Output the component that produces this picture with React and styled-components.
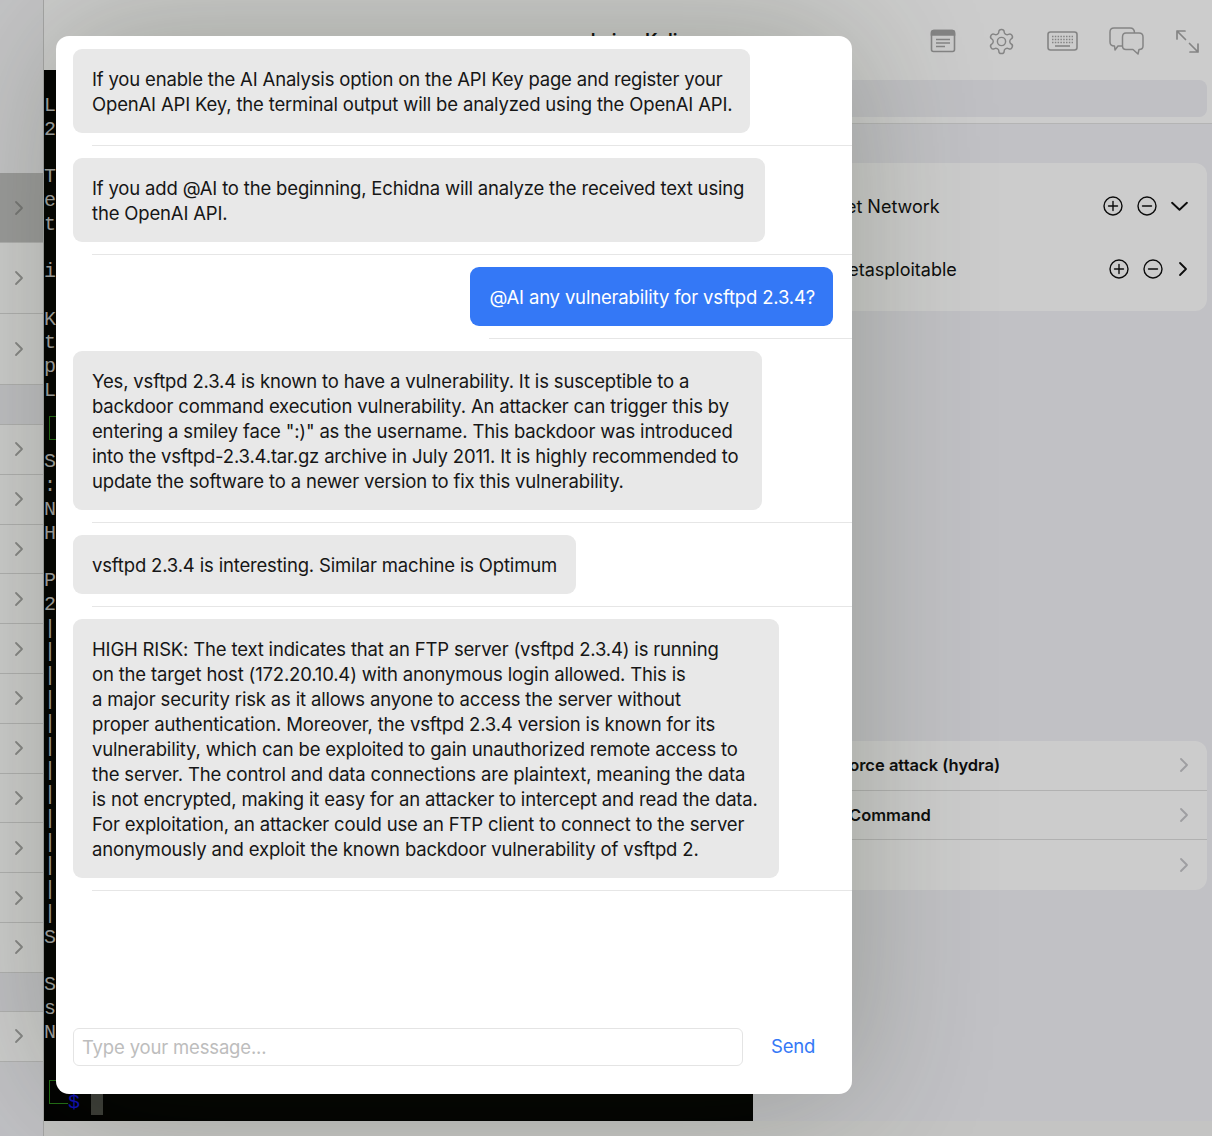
import React from 'react'
import styled, { createGlobalStyle } from 'styled-components'

const GlobalStyle = createGlobalStyle`
  html, body { margin: 0; padding: 0; background: #f2f2f7; }
  body { font-family: Inter, "Noto Sans", "Liberation Sans", sans-serif; }
  * { box-sizing: border-box; }
`

const sideRows = [
  { h: 173, kind: 'blank' },
  { h: 70, kind: 'selected', arrow: true },
  { h: 71, kind: 'row', arrow: true },
  { h: 71, kind: 'row', arrow: true },
  { h: 40, kind: 'section' },
  ...Array.from({ length: 11 }, () => ({ h: 49.8, kind: 'row', arrow: true })),
  { h: 39, kind: 'section' },
  { h: 50, kind: 'row', arrow: true },
]

// only the first column of the terminal shows beside the sheet
const termLines = [
  '', 'L', '2', '', 'T', 'e', 't', '', 'i', '', 'K', 't', 'p', 'L', '', '', 'S', ':', 'N', 'H', '', 'P', '2',
  '|', '|', '|', '|', '|', '|', '|', '|', '|', '|', '|', '|', '|', 'S', '', 'S', 's', 'N',
]

const messages = [
  { extra: 0, lines: ['If you enable the AI Analysis option on the API Key page and register your', 'OpenAI API Key, the terminal output will be analyzed using the OpenAI API.'] },
  { extra: 3, lines: ['If you add @AI to the beginning, Echidna will analyze the received text using', 'the OpenAI API.'] },
  { mine: true, extra: 0, lines: ['@AI any vulnerability for vsftpd 2.3.4?'] },
  {
    extra: 6,
    lines: [
      'Yes, vsftpd 2.3.4 is known to have a vulnerability. It is susceptible to a',
      'backdoor command execution vulnerability. An attacker can trigger this by',
      'entering a smiley face ":)" as the username. This backdoor was introduced',
      'into the vsftpd-2.3.4.tar.gz archive in July 2011. It is highly recommended to',
      'update the software to a newer version to fix this vulnerability.',
    ],
  },
  { extra: 1, lines: ['vsftpd 2.3.4 is interesting. Similar machine is Optimum'] },
  {
    extra: 3,
    lines: [
      'HIGH RISK: The text indicates that an FTP server (vsftpd 2.3.4) is running',
      'on the target host (172.20.10.4) with anonymous login allowed. This is',
      'a major security risk as it allows anyone to access the server without',
      'proper authentication. Moreover, the vsftpd 2.3.4 version is known for its',
      'vulnerability, which can be exploited to gain unauthorized remote access to',
      'the server. The control and data connections are plaintext, meaning the data',
      'is not encrypted, making it easy for an attacker to intercept and read the data.',
      'For exploitation, an attacker could use an FTP client to connect to the server',
      'anonymously and exploit the known backdoor vulnerability of vsftpd 2.',
    ],
  },
]

function Chevron({ right = true, color = '#a8a8a8', size = 16 }) {
  return (
    <svg width={size} height={size} viewBox="0 0 16 16" fill="none" stroke={color} strokeWidth="1.8" strokeLinecap="round" strokeLinejoin="round">
      {right ? <path d="M5 2 L11 8 L5 14" /> : <path d="M1 4.5 L8 11 L15 4.5" />}
    </svg>
  )
}

function RoundIcon({ plus }) {
  return (
    <svg width="20" height="20" viewBox="0 0 20 20" fill="none" stroke="#111" strokeWidth="1.4" strokeLinecap="round">
      <circle cx="10" cy="10" r="9" />
      <path d="M5.5 10 H14.5" />
      {plus && <path d="M10 5.5 V14.5" />}
    </svg>
  )
}

function ToolIcons() {
  return (
    <Tools>
      <svg width="26" height="24" viewBox="0 0 26 24" fill="none" stroke="#a6a6a6" strokeWidth="1.6">
        <rect x="1.5" y="1.5" width="23" height="21" rx="2" />
        <path d="M1.5 5 Q1.5 1.5 4 1.5 H22 Q24.5 1.5 24.5 5 V6 H1.5 Z" fill="#a6a6a6" />
        <path d="M6 10.5 H20 M6 14 H20 M6 17.5 H15" />
      </svg>
      <svg width="29" height="29" viewBox="0 0 24 24" fill="none" stroke="#a6a6a6" strokeWidth="1.2" strokeLinejoin="round">
        <path d="M12.22 2h-.44a2 2 0 0 0-2 2v.18a2 2 0 0 1-1 1.73l-.43.25a2 2 0 0 1-2 0l-.15-.08a2 2 0 0 0-2.73.73l-.22.38a2 2 0 0 0 .73 2.73l.15.1a2 2 0 0 1 1 1.72v.51a2 2 0 0 1-1 1.74l-.15.09a2 2 0 0 0-.73 2.73l.22.38a2 2 0 0 0 2.73.73l.15-.08a2 2 0 0 1 2 0l.43.25a2 2 0 0 1 1 1.73V20a2 2 0 0 0 2 2h.44a2 2 0 0 0 2-2v-.18a2 2 0 0 1 1-1.73l.43-.25a2 2 0 0 1 2 0l.15.08a2 2 0 0 0 2.73-.73l.22-.39a2 2 0 0 0-.73-2.73l-.15-.08a2 2 0 0 1-1-1.74v-.5a2 2 0 0 1 1-1.74l.15-.09a2 2 0 0 0 .73-2.73l-.22-.38a2 2 0 0 0-2.73-.73l-.15.08a2 2 0 0 1-2 0l-.43-.25a2 2 0 0 1-1-1.73V4a2 2 0 0 0-2-2z" />
        <circle cx="12" cy="12" r="3.4" />
      </svg>
      <svg width="31" height="20" viewBox="0 0 31 20" fill="none" stroke="#a6a6a6" strokeWidth="1.6">
        <rect x="1" y="1" width="29" height="18" rx="2.5" />
        <path d="M5 5.5 H26 M5 8.5 H26 M5 11.5 H26" strokeWidth="1.5" strokeDasharray="1.5 1.3" />
        <path d="M8 15 H23" />
      </svg>
      <svg width="35" height="28" viewBox="0 0 35 28" fill="none" stroke="#a6a6a6" strokeWidth="1.5" strokeLinejoin="round">
        <path d="M13.5 19 H9 L6 23 L5.5 19 Q1 19 1 15 V5 Q1 1 5 1 H21 Q25.5 1 25.5 6" />
        <path d="M17 6 H30 Q34 6 34 10 V19 Q34 22.5 30 22.5 L29 27 L24 22.5 H17 Q13.5 22.5 13.5 19 V10 Q13.5 6 17 6 Z" />
      </svg>
      <svg width="25" height="25" viewBox="0 0 25 25" fill="none" stroke="#a6a6a6" strokeWidth="1.7" strokeLinecap="round" strokeLinejoin="round">
        <path d="M2 10 V2 H10 M2 2 L10.5 10.5 M14.5 14.5 L23 23 M15 23 H23 V15" />
      </svg>
    </Tools>
  )
}

export default function App() {
  return (
    <Page>
      <GlobalStyle />
      <Sidebar>
        {sideRows.map((r, i) => (
          <SideRow key={i} $kind={r.kind} style={{ height: r.h }}>
            {r.arrow && <Chevron color={r.kind === 'selected' ? '#949494' : '#a8a8a8'} />}
          </SideRow>
        ))}
      </Sidebar>

      <Main>
        <Columns>
          <TermColumn>
            <TermHeader>
              <Title>admin - Kali</Title>
            </TermHeader>
            <Terminal>
              {termLines.map((l, i) => (
                <TermLine key={i}>{l}</TermLine>
              ))}
              <GreenBox $top={346} />
              <GreenBox $top={1010} />
              <Prompt>$</Prompt>
              <Cursor />
            </Terminal>
          </TermColumn>

          <RightPanel>
            <NavArea>
              <ToolIcons />
              <SearchBar />
            </NavArea>
            <Card $top={39} $bottom={22}>
              <NetworkRow $height={86} $right={19}>
                <NetworkName $left={55}>Target Network</NetworkName>
                <RoundGroup $shift={0}>
                  <RoundIcon plus />
                  <RoundIcon />
                  <Chevron right={false} color="#111" size={17} />
                </RoundGroup>
              </NetworkRow>
              <NetworkRow $height={40} $right={16}>
                <NetworkName $left={79}>Metasploitable</NetworkName>
                <RoundGroup $shift={-2}>
                  <RoundIcon plus />
                  <RoundIcon />
                  <Chevron color="#111" />
                </RoundGroup>
              </NetworkRow>
            </Card>
            <Card $top={430} $bottom={0}>
              <ActionRow>
                <ActionName $left={43}>Brute force attack (hydra)</ActionName>
                <Chevron color="#c6c6ca" />
              </ActionRow>
              <ActionRow>
                <ActionName $left={30}>Custom Command</ActionName>
                <Chevron color="#c6c6ca" />
              </ActionRow>
              <ActionRow>
                <span />
                <Chevron color="#c6c6ca" />
              </ActionRow>
            </Card>
          </RightPanel>
        </Columns>
        <BottomBar />
      </Main>

      <Backdrop />
      <Sheet>
        <MessageList>
          {messages.map((m, i) => (
            <MessageRow key={i} $mine={m.mine}>
              <Bubble $mine={m.mine} $extra={m.extra}>
                {m.lines.map((l, j) => (
                  <React.Fragment key={j}>
                    {l}
                    {j < m.lines.length - 1 && <br />}
                  </React.Fragment>
                ))}
              </Bubble>
              <Divider />
            </MessageRow>
          ))}
        </MessageList>
        <Composer>
          <Input placeholder="Type your message..." readOnly />
          <SendButton>Send</SendButton>
        </Composer>
      </Sheet>
    </Page>
  )
}

const Page = styled.div`
  position: relative;
  width: 1212px;
  height: 1136px;
  overflow: hidden;
  display: flex;
  background: #f2f2f7;
`

const Sidebar = styled.div`
  width: 44px;
  flex: none;
  border-right: 1px solid #d0d0d0;
  display: flex;
  flex-direction: column;
  background: #f2f2f7;
`

const SideRow = styled.div`
  display: flex;
  align-items: center;
  justify-content: flex-end;
  padding-right: 16px;
  border-bottom: ${p => (p.$kind === 'blank' ? 'none' : '1px solid #dcdcdc')};
  background: ${p => (p.$kind === 'selected' ? '#c2c2c2' : p.$kind === 'row' ? '#fff' : p.$kind === 'section' ? '#efeff4' : '#f6f6f8')};
`

const Main = styled.div`
  flex: 1;
  min-width: 0;
  display: flex;
  flex-direction: column;
`

const Columns = styled.div`
  flex: 1;
  min-height: 0;
  display: flex;
`

const TermColumn = styled.div`
  width: 709px;
  flex: none;
  display: flex;
  flex-direction: column;
`

const TermHeader = styled.div`
  height: 70px;
  flex: none;
  background: #fff;
  overflow: hidden;
`

const Title = styled.div`
  padding-top: 30px;
  padding-left: 530px;
  font-size: 18px;
  font-weight: 600;
  color: #111;
  white-space: nowrap;
`

const Terminal = styled.div`
  position: relative;
  flex: 1;
  background: #000;
  overflow: hidden;
  font-family: "Liberation Mono", monospace;
  font-size: 20px;
  line-height: 23.78px;
  color: #d0d0d0;
`

const TermLine = styled.div`
  height: 23.78px;
`

const GreenBox = styled.div`
  position: absolute;
  left: 5px;
  top: ${p => p.$top}px;
  width: 19px;
  height: 24px;
  border: 1px solid #2b8a1c;
  border-right: none;
`

const Prompt = styled.div`
  position: absolute;
  left: 24px;
  top: 1021px;
  color: #1414e0;
`

const Cursor = styled.div`
  position: absolute;
  left: 47px;
  top: 1023px;
  width: 12px;
  height: 22px;
  background: #4a4c46;
`

const RightPanel = styled.div`
  flex: 1;
  min-width: 0;
  display: flex;
  flex-direction: column;
`

const NavArea = styled.div`
  height: 124px;
  flex: none;
  background: #fff;
  border-bottom: 1px solid #e2e2e2;
  padding: 28px 5px 0 0;
`

const Tools = styled.div`
  height: 26px;
  margin-bottom: 26px;
  display: flex;
  align-items: center;
  justify-content: flex-end;
  gap: 31px;
  padding-right: 7px;
`

const SearchBar = styled.div`
  height: 37px;
  border-radius: 8px;
  background: #f0f0f5;
`

const Card = styled.div`
  margin: ${p => p.$top}px 5px 0 0;
  padding-bottom: ${p => p.$bottom}px;
  background: #fff;
  border-radius: 12px;
  overflow: hidden;
`

const NetworkRow = styled.div`
  height: ${p => p.$height}px;
  display: flex;
  align-items: center;
  justify-content: space-between;
  padding-right: ${p => p.$right}px;
`

const NetworkName = styled.div`
  padding-left: ${p => p.$left}px;
  font-size: 18px;
  color: #111;
  white-space: nowrap;
`

const RoundGroup = styled.div`
  display: flex;
  align-items: center;
  gap: 14px;
  & > svg:last-child { margin-left: ${p => p.$shift}px; }
`

const ActionRow = styled.div`
  height: 49.7px;
  display: flex;
  align-items: center;
  justify-content: space-between;
  padding-right: 15px;
  border-bottom: 1px solid #dedede;
  &:last-child { border-bottom: none; }
`

const ActionName = styled.div`
  padding-left: ${p => p.$left}px;
  font-size: 16.5px;
  font-weight: 600;
  color: #111;
  white-space: nowrap;
`

const BottomBar = styled.div`
  height: 15px;
  flex: none;
  background: #f6f6f4;
`

const Backdrop = styled.div`
  position: absolute;
  inset: 0;
  background: rgba(0, 0, 0, 0.2);
`

const Sheet = styled.div`
  position: absolute;
  left: 56px;
  top: 36px;
  width: 796px;
  height: 1058px;
  background: #fff;
  border-radius: 13px;
  display: flex;
  flex-direction: column;
  overflow: hidden;
  box-shadow: 0 0 140px rgba(40, 50, 20, 0.28);
`

const MessageList = styled.div`
  flex: 1;
  min-height: 0;
  display: flex;
  flex-direction: column;
`

const MessageRow = styled.div`
  width: ${p => (p.$mine ? 'fit-content' : '100%')};
  margin-left: ${p => (p.$mine ? 'auto' : '0')};
  padding: 13px 0 0 ${p => (p.$mine ? '0' : '17px')};
  display: flex;
  flex-direction: column;
`

const Bubble = styled.div`
  width: fit-content;
  margin-right: ${p => (p.$mine ? '19px' : '0')};
  padding: 17.5px ${p => 18 + p.$extra}px 16.5px 19px;
  border-radius: 9px;
  background: ${p => (p.$mine ? '#3478f6' : '#e8e8e8')};
  color: ${p => (p.$mine ? '#fff' : '#161616')};
  font-size: 18.5px;
  letter-spacing: -0.17px;
  line-height: 25px;
  white-space: nowrap;
`

const Divider = styled.div`
  height: 1px;
  margin: 12px 0 -1px 18.5px;
  background: #e6e6e6;
`

const Composer = styled.div`
  height: 66px;
  flex: none;
  display: flex;
  align-items: flex-start;
  padding-left: 17px;
  gap: 28px;
`

const Input = styled.input`
  flex: none;
  width: 670px;
  height: 38px;
  padding: 0 8px;
  border: 1px solid #e4e4e4;
  border-radius: 6px;
  outline: none;
  font-family: inherit;
  font-size: 18.5px;
  letter-spacing: -0.17px;
  color: #111;
  &::placeholder { color: #bdbdbd; }
`

const SendButton = styled.div`
  padding-top: 7px;
  font-size: 18.5px;
  letter-spacing: -0.17px;
  color: #3478f6;
`
